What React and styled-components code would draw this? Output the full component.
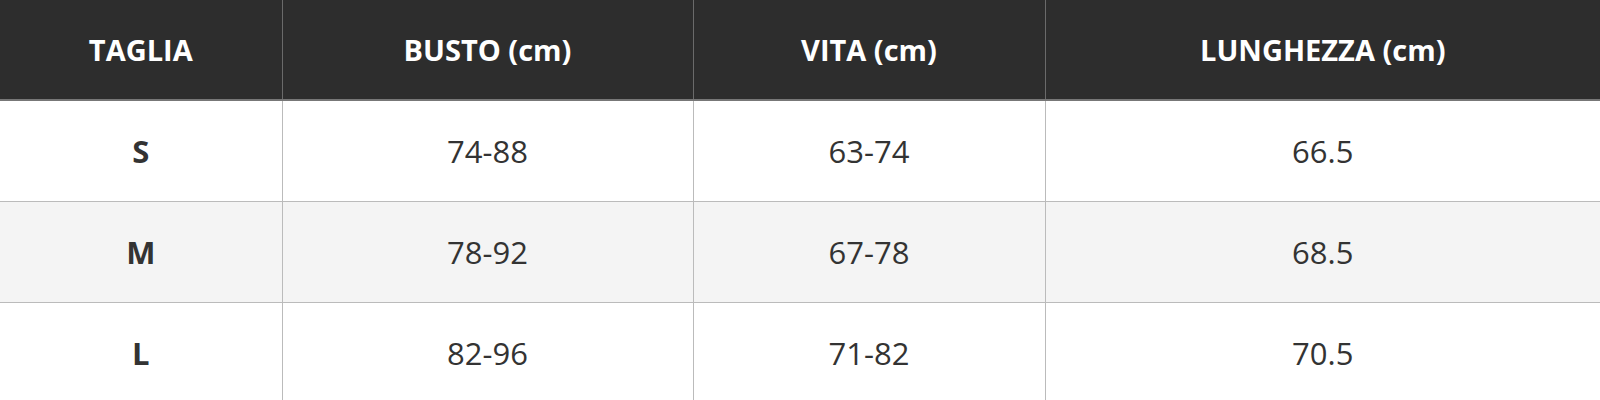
import React from 'react';
import styled, { createGlobalStyle } from 'styled-components';

const GlobalStyle = createGlobalStyle`
  html, body {
    margin: 0;
    padding: 0;
    background: #ffffff;
    font-family: "Open Sans", "Noto Sans", sans-serif;
  }
`;

const SizeTable = styled.table`
  width: 100%;
  border-collapse: collapse;
  table-layout: fixed;
  color: #333333;
`;

const HeadCell = styled.th`
  height: 99px;
  padding: 0;
  background: #2d2d2d;
  color: #ffffff;
  font-size: 29px;
  font-weight: 700;
  text-align: center;
  border-left: 1px solid #6a6a6a;
  border-bottom: 2px solid #777777;

  &:first-child {
    border-left: none;
  }
`;

const Row = styled.tr`
  background: ${(p) => (p.$shaded ? '#f4f4f4' : '#ffffff')};
`;

const Cell = styled.td`
  height: 100px;
  padding: 0;
  text-align: center;
  font-size: 31px;
  font-weight: ${(p) => (p.$bold ? 700 : 500)};
  border-left: 1px solid #bbbbbb;
  border-bottom: 1px solid #bbbbbb;

  &:first-child {
    border-left: none;
  }
`;

const columns = [
  { label: 'TAGLIA', width: 282 },
  { label: 'BUSTO (cm)', width: 411 },
  { label: 'VITA (cm)', width: 352 },
  { label: 'LUNGHEZZA (cm)' },
];

const rows = [
  ['S', '74-88', '63-74', '66.5'],
  ['M', '78-92', '67-78', '68.5'],
  ['L', '82-96', '71-82', '70.5'],
];

const App = () => (
  <>
    <GlobalStyle />
    <SizeTable>
      <colgroup>
        {columns.map((col, i) => (
          <col key={i} style={col.width ? { width: `${col.width}px` } : undefined} />
        ))}
      </colgroup>
      <thead>
        <tr>
          {columns.map((col) => (
            <HeadCell key={col.label}>{col.label}</HeadCell>
          ))}
        </tr>
      </thead>
      <tbody>
        {rows.map((row, r) => (
          <Row key={row[0]} $shaded={r % 2 === 1}>
            {row.map((value, c) => (
              <Cell key={c} $bold={c === 0}>{value}</Cell>
            ))}
          </Row>
        ))}
      </tbody>
    </SizeTable>
  </>
);

export default App;
